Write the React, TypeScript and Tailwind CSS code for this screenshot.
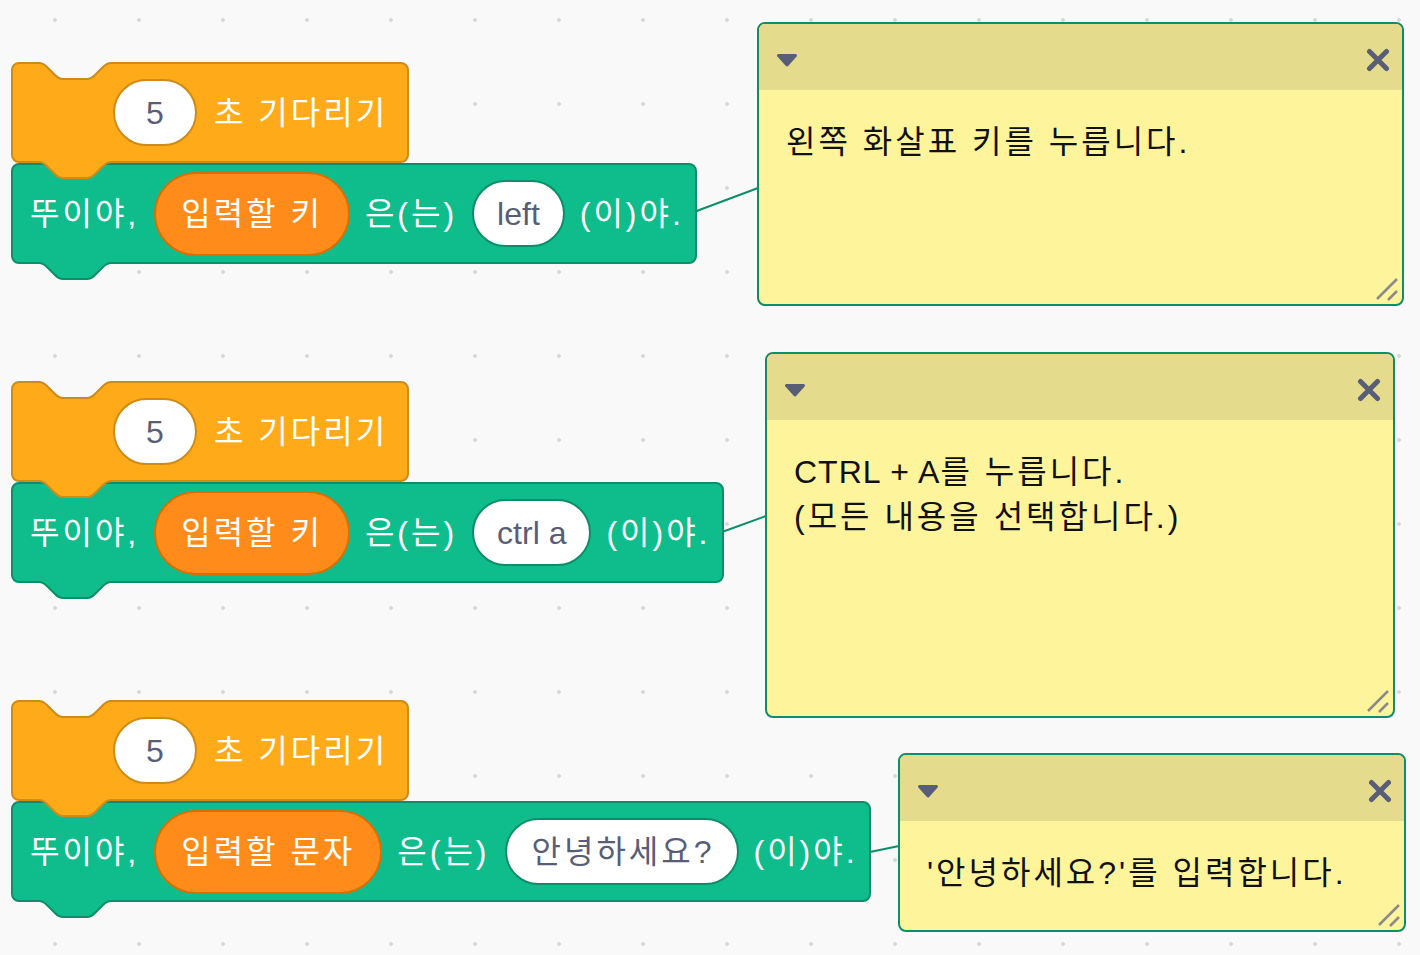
import React from "react";

// scratch-ish notch: 72px wide, 16px deep
const NOTCH =
  "c4,0 6,2 8,4 l8,8 c2,2 4,4 8,4 h24 c4,0 6,-2 8,-4 l8,-8 c2,-2 4,-4 8,-4";

const tones = {
  orange: {
    box: "bg-[#FFAB19] border-[#CF8B17]",
    field: "border-[#CF8B17]",
    fill: "#FFAB19",
    stroke: "#CF8B17",
  },
  green: {
    box: "bg-[#0FBD8C] border-[#0B8E69]",
    field: "border-[#0B8E69]",
    fill: "#0FBD8C",
    stroke: "#0B8E69",
  },
};

type Tone = keyof typeof tones;

const Notch = ({fill, stroke, tab}: {fill: string; stroke: string; tab?: boolean}) => (
  <svg
    className={`absolute left-[26px] ${tab ? "top-full" : "top-[-2px]"}`}
    width="72"
    height="19"
    overflow="visible"
  >
    <path d={`M0,0 L0,1 ${NOTCH} L72,0 Z`} fill={fill} />
    <path d={`M0,1 ${NOTCH}`} fill="none" stroke={stroke} strokeWidth="2" />
  </svg>
);

const Block = ({
  tone,
  top,
  className,
  children,
}: {
  tone: Tone;
  top?: boolean;
  className?: string;
  children: React.ReactNode;
}) => {
  const t = tones[tone];
  return (
    <div
      className={`relative flex h-[101px] w-fit items-center rounded-lg border-2 text-[32px] tracking-[3px] text-white ${t.box} ${className ?? ""}`}
    >
      {top && <Notch fill="#F9F9F9" stroke={t.stroke} />}
      {children}
      <Notch fill={t.fill} stroke={t.stroke} tab />
    </div>
  );
};

const Field = ({tone, children, className}: {tone: Tone; children: React.ReactNode; className?: string}) => (
  <div
    className={`flex h-[67px] min-w-[84px] items-center justify-center rounded-full border-2 bg-white text-[#575E75] ${tones[tone].field} ${className ?? "px-[23px] tracking-normal"}`}
  >
    {children}
  </div>
);

const Reporter = ({children}: {children: React.ReactNode}) => (
  <div className="flex h-[84px] items-center rounded-full border-2 border-[#DB6E00] bg-[#FF8C1A] pl-[25px] pr-[25px]">
    {children}
  </div>
);

const Stack = ({
  className,
  reporter,
  value,
  korean,
}: {
  className: string;
  reporter: string;
  value: string;
  korean?: boolean;
}) => (
  <div className={`absolute flex flex-col items-start ${className}`}>
    <Block tone="orange" top className="z-10 gap-[17px] pl-[100px] pr-[19px]">
      <Field tone="orange">5</Field>
      <span>초 기다리기</span>
    </Block>
    <Block tone="green" className="gap-[15px] pl-[17px] pr-[11px]">
      <span>뚜이야,</span>
      <Reporter>{reporter}</Reporter>
      <span>은(는)</span>
      <Field tone="green" className={korean ? "pl-[25px] pr-[22px]" : undefined}>
        {value}
      </Field>
      <span>(이)야.</span>
    </Block>
  </div>
);

const Note = ({className, children}: {className: string; children: React.ReactNode}) => (
  <div
    className={`absolute flex flex-col overflow-hidden rounded-lg border-2 border-[#0B8E69] bg-[#FEF49C] ${className}`}
  >
    <div className="flex h-[66px] shrink-0 items-center justify-between bg-[#E4DB8C] pl-[17px] pr-[12px] pt-[5px]">
      <svg width="22" height="14" viewBox="0 0 22 14">
        <path
          d="M2.5,2.5 L19.5,2.5 L11,12 Z"
          fill="#575E75"
          stroke="#575E75"
          strokeWidth="3"
          strokeLinejoin="round"
        />
      </svg>
      <svg width="24" height="24" viewBox="0 0 24 24">
        <path
          d="M3.5,3.5 L20.5,20.5 M20.5,3.5 L3.5,20.5"
          stroke="#575E75"
          strokeWidth="5"
          strokeLinecap="round"
        />
      </svg>
    </div>
    <div className="px-[27px] pt-[30px] text-[32px] leading-[45px] tracking-[3px] text-[#111]">{children}</div>
    <svg className="absolute bottom-[3px] right-[3px]" width="24" height="24">
      <path d="M2,22 L22,2 M13,23 L22,14" stroke="#8a8a8a" strokeWidth="2.5" />
    </svg>
  </div>
);

export default function App() {
  return (
    <div className="relative h-[955px] w-full overflow-hidden bg-[#F9F9F9] bg-[image:radial-gradient(circle,#d9d9d9_1.6px,transparent_2.2px)] bg-[size:84px_84px] bg-[position:13px_62px] font-['Liberation_Sans','Noto_Sans_CJK_KR',sans-serif]">
      {/* comment connectors */}
      <svg className="absolute inset-0 h-full w-full">
        <g stroke="#0B8E69" strokeWidth="2">
          <line x1="694" y1="212" x2="758" y2="188" />
          <line x1="722" y1="532" x2="766" y2="516" />
          <line x1="870" y1="852" x2="899" y2="846" />
        </g>
      </svg>

      <Stack className="left-[11px] top-[62px]" reporter="입력할 키" value="left" />
      <Stack className="left-[11px] top-[381px]" reporter="입력할 키" value="ctrl a" />
      <Stack className="left-[11px] top-[700px]" reporter="입력할 문자" value="안녕하세요?" korean />

      <Note className="left-[757px] top-[22px] h-[284px] w-[647px]">왼쪽 화살표 키를 누릅니다.</Note>
      <Note className="left-[765px] top-[352px] h-[366px] w-[630px]">
        <span className="tracking-[1px]">CTRL + A</span>를 누릅니다.
        <br />
        (모든 내용을 선택합니다.)
      </Note>
      <Note className="left-[898px] top-[753px] h-[179px] w-[508px]">&apos;안녕하세요?&apos;를 입력합니다.</Note>
    </div>
  );
}
